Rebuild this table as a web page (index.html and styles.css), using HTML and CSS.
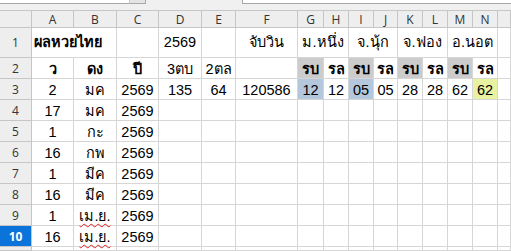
FILE: index.html
```html
<!DOCTYPE html>
<html lang="th">
<head>
<meta charset="utf-8">
<title>Sheet</title>
<link rel="stylesheet" href="styles.css">
</head>
<body>
<div class="topbar">
  <div class="namebox"></div>
  <div class="nbbtn"></div>
  <div class="tools"></div>
  <div class="formula"></div>
</div>
<div class="sheet">
  <div class="corner"></div>
  <div class="ch">A</div><div class="ch">B</div><div class="ch">C</div><div class="ch">D</div><div class="ch">E</div><div class="ch">F</div><div class="ch">G</div><div class="ch">H</div><div class="ch">I</div><div class="ch">J</div><div class="ch">K</div><div class="ch">L</div><div class="ch">M</div><div class="ch">N</div><div class="ch"></div>

  <div class="rh">1</div>
  <div class="c r1 title span2">ผลหวยไทย</div>
  <div class="c r1"></div>
  <div class="c r1">2569</div>
  <div class="c r1"></div>
  <div class="c r1">จับวิน</div>
  <div class="c r1 span2">ม.หนึ่ง</div>
  <div class="c r1 span2">จ.นุ้ก</div>
  <div class="c r1 span2">จ.ฟอง</div>
  <div class="c r1 span2">อ.นอต</div>
  <div class="c r1"></div>

  <div class="rh">2</div>
  <div class="c b">ว</div><div class="c b">ดง</div><div class="c b">ปี</div>
  <div class="c">3ตบ</div><div class="c">2ตล</div><div class="c"></div>
  <div class="c b gray">รบ</div><div class="c b">รล</div>
  <div class="c b gray">รบ</div><div class="c b">รล</div>
  <div class="c b gray">รบ</div><div class="c b">รล</div>
  <div class="c b gray">รบ</div><div class="c b">รล</div>
  <div class="c"></div>

  <div class="rh">3</div>
  <div class="c">2</div><div class="c">มค</div><div class="c">2569</div>
  <div class="c">135</div><div class="c">64</div><div class="c">120586</div>
  <div class="c blue">12</div><div class="c">12</div>
  <div class="c blue">05</div><div class="c">05</div>
  <div class="c">28</div><div class="c">28</div>
  <div class="c">62</div><div class="c lime">62</div>
  <div class="c"></div>

  <div class="rh">4</div>
  <div class="c">17</div><div class="c">มค</div><div class="c">2569</div>
  <div class="c"></div><div class="c"></div><div class="c"></div><div class="c"></div><div class="c"></div><div class="c"></div><div class="c"></div><div class="c"></div><div class="c"></div><div class="c"></div><div class="c"></div><div class="c"></div>

  <div class="rh">5</div>
  <div class="c">1</div><div class="c">กะ</div><div class="c">2569</div>
  <div class="c"></div><div class="c"></div><div class="c"></div><div class="c"></div><div class="c"></div><div class="c"></div><div class="c"></div><div class="c"></div><div class="c"></div><div class="c"></div><div class="c"></div><div class="c"></div>

  <div class="rh">6</div>
  <div class="c">16</div><div class="c">กพ</div><div class="c">2569</div>
  <div class="c"></div><div class="c"></div><div class="c"></div><div class="c"></div><div class="c"></div><div class="c"></div><div class="c"></div><div class="c"></div><div class="c"></div><div class="c"></div><div class="c"></div><div class="c"></div>

  <div class="rh">7</div>
  <div class="c">1</div><div class="c">มีค</div><div class="c">2569</div>
  <div class="c"></div><div class="c"></div><div class="c"></div><div class="c"></div><div class="c"></div><div class="c"></div><div class="c"></div><div class="c"></div><div class="c"></div><div class="c"></div><div class="c"></div><div class="c"></div>

  <div class="rh">8</div>
  <div class="c">16</div><div class="c">มีค</div><div class="c">2569</div>
  <div class="c"></div><div class="c"></div><div class="c"></div><div class="c"></div><div class="c"></div><div class="c"></div><div class="c"></div><div class="c"></div><div class="c"></div><div class="c"></div><div class="c"></div><div class="c"></div>

  <div class="rh">9</div>
  <div class="c">1</div><div class="c"><span class="spell">เม.ย.</span></div><div class="c">2569</div>
  <div class="c"></div><div class="c"></div><div class="c"></div><div class="c"></div><div class="c"></div><div class="c"></div><div class="c"></div><div class="c"></div><div class="c"></div><div class="c"></div><div class="c"></div><div class="c"></div>

  <div class="rh sel">10</div>
  <div class="c">16</div><div class="c"><span class="spell">เม.ย.</span></div><div class="c">2569</div>
  <div class="c"></div><div class="c"></div><div class="c"></div><div class="c"></div><div class="c"></div><div class="c"></div><div class="c"></div><div class="c"></div><div class="c"></div><div class="c"></div><div class="c"></div><div class="c"></div>

  <div class="rh"></div>
  <div class="c"></div><div class="c"></div><div class="c"></div><div class="c"></div><div class="c"></div><div class="c"></div><div class="c"></div><div class="c"></div><div class="c"></div><div class="c"></div><div class="c"></div><div class="c"></div><div class="c"></div><div class="c"></div><div class="c"></div>
</div>
</body>
</html>
```

FILE: styles.css
```css
* { box-sizing: border-box; }
html, body { margin: 0; padding: 0; background: #ffffff; }
body { width: 511px; height: 251px; overflow: hidden; }

.topbar {
  height: 10px;
  display: flex;
  align-items: flex-start;
  background: #f0f0f0;
}
.namebox {
  width: 130px;
  height: 4px;
  background: #ffffff;
  border-bottom: 1px solid #a8a8a8;
  border-right: 1px solid #c8c8c8;
}
.nbbtn {
  width: 16px;
  height: 4px;
  background: #e4e4e4;
  border-bottom: 1px solid #a8a8a8;
  border-right: 1px solid #a8a8a8;
}
.tools { width: 96px; height: 4px; }
.formula {
  flex: 1;
  height: 4px;
  background: #ffffff;
  border-left: 1px solid #a8a8a8;
  border-bottom: 1px solid #a8a8a8;
}

.sheet {
  display: grid;
  grid-template-columns: 32px 42px 43px 42px 43px 34px 62px 26px 25px 25px 24px 25px 25px 25px 25px 13px;
  grid-template-rows: 18px 30px repeat(9, 21px) 4px;
  height: 241px;
  overflow: hidden;
  font-family: "Liberation Sans", "Noto Sans", sans-serif;
  color: #000000;
}

.corner, .ch, .rh {
  background: #eeeeee;
  border-right: 1px solid #c6c6c6;
  border-bottom: 1px solid #c6c6c6;
  font-family: "Open Sans", "Noto Sans", sans-serif;
  font-size: 12px;
  color: #333333;
  display: flex;
  align-items: center;
  justify-content: center;
  overflow: hidden;
}
.corner, .ch { border-top: 1px solid #c6c6c6; }
.rh.sel {
  background: #0a74da;
  color: #ffffff;
  font-weight: 700;
}

.c {
  border-right: 1px solid #d6d6d6;
  border-bottom: 1px solid #d6d6d6;
  font-size: 14.5px;
  line-height: 17px;
  display: flex;
  align-items: flex-end;
  justify-content: center;
  white-space: nowrap;
  min-width: 0;
}
.r1 { align-items: center; }
.span2 { grid-column: span 2; }
.title {
  justify-content: flex-start;
  padding-left: 2px;
  font-weight: 700;
}
.b { font-weight: 700; }
.gray { background: #cccccc; }
.blue { background: #b4c7dc; }
.lime { background: #e8f2a1; }

.spell {
  text-decoration: underline wavy #e02020;
  text-decoration-thickness: 1px;
  text-underline-offset: 2px;
}
```
